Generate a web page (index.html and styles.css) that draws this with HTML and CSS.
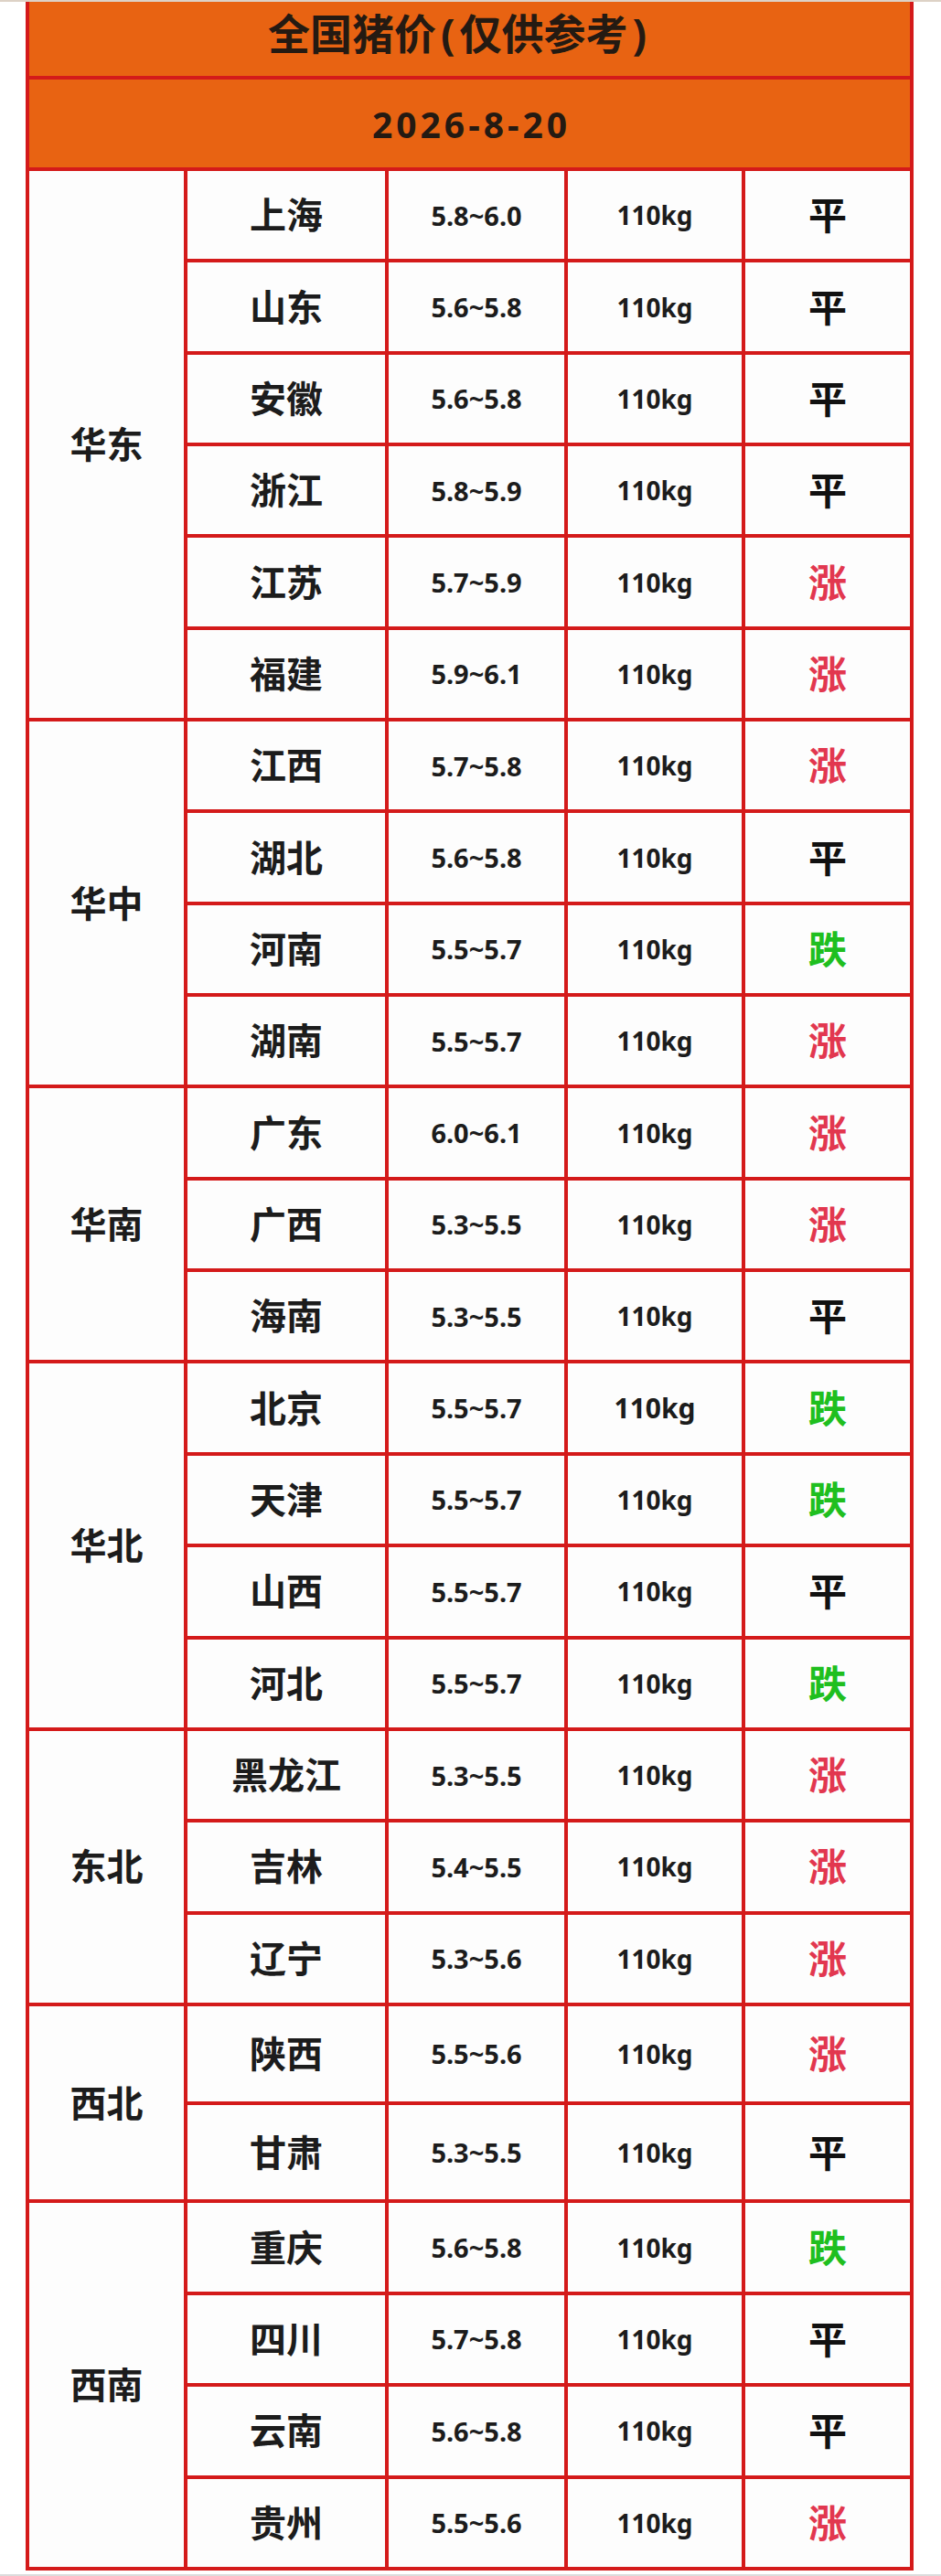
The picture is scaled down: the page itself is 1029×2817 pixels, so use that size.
FILE: index.html
```html
<!DOCTYPE html>
<html lang="zh-CN">
<head>
<meta charset="utf-8">
<title>全国猪价</title>
<link rel="stylesheet" href="styles.css">
</head>
<body>
<div class="page">
  <div class="sheet">
    <div class="head title">全国猪价<span class="paren">(</span>仅供参考<span class="paren">)</span></div>
    <div class="head date">2026-8-20</div>

    <div class="region span6">华东</div>
    <div class="prov">上海</div><div class="price">5.8~6.0</div><div class="wt">110kg</div><div class="st flat">平</div>
    <div class="prov">山东</div><div class="price">5.6~5.8</div><div class="wt">110kg</div><div class="st flat">平</div>
    <div class="prov">安徽</div><div class="price">5.6~5.8</div><div class="wt">110kg</div><div class="st flat">平</div>
    <div class="prov">浙江</div><div class="price">5.8~5.9</div><div class="wt">110kg</div><div class="st flat">平</div>
    <div class="prov">江苏</div><div class="price">5.7~5.9</div><div class="wt">110kg</div><div class="st up">涨</div>
    <div class="prov">福建</div><div class="price">5.9~6.1</div><div class="wt">110kg</div><div class="st up">涨</div>

    <div class="region span4">华中</div>
    <div class="prov">江西</div><div class="price">5.7~5.8</div><div class="wt">110kg</div><div class="st up">涨</div>
    <div class="prov">湖北</div><div class="price">5.6~5.8</div><div class="wt">110kg</div><div class="st flat">平</div>
    <div class="prov">河南</div><div class="price">5.5~5.7</div><div class="wt">110kg</div><div class="st down">跌</div>
    <div class="prov">湖南</div><div class="price">5.5~5.7</div><div class="wt">110kg</div><div class="st up">涨</div>

    <div class="region span3">华南</div>
    <div class="prov">广东</div><div class="price">6.0~6.1</div><div class="wt">110kg</div><div class="st up">涨</div>
    <div class="prov">广西</div><div class="price">5.3~5.5</div><div class="wt">110kg</div><div class="st up">涨</div>
    <div class="prov">海南</div><div class="price">5.3~5.5</div><div class="wt">110kg</div><div class="st flat">平</div>

    <div class="region span4">华北</div>
    <div class="prov">北京</div><div class="price">5.5~5.7</div><div class="wt big">110kg</div><div class="st down">跌</div>
    <div class="prov">天津</div><div class="price">5.5~5.7</div><div class="wt">110kg</div><div class="st down">跌</div>
    <div class="prov">山西</div><div class="price">5.5~5.7</div><div class="wt">110kg</div><div class="st flat">平</div>
    <div class="prov">河北</div><div class="price">5.5~5.7</div><div class="wt">110kg</div><div class="st down">跌</div>

    <div class="region span3">东北</div>
    <div class="prov">黑龙江</div><div class="price">5.3~5.5</div><div class="wt">110kg</div><div class="st up">涨</div>
    <div class="prov">吉林</div><div class="price">5.4~5.5</div><div class="wt">110kg</div><div class="st up">涨</div>
    <div class="prov">辽宁</div><div class="price">5.3~5.6</div><div class="wt">110kg</div><div class="st up">涨</div>

    <div class="region span2">西北</div>
    <div class="prov">陕西</div><div class="price">5.5~5.6</div><div class="wt">110kg</div><div class="st up">涨</div>
    <div class="prov">甘肃</div><div class="price">5.3~5.5</div><div class="wt">110kg</div><div class="st flat">平</div>

    <div class="region span4">西南</div>
    <div class="prov">重庆</div><div class="price">5.6~5.8</div><div class="wt">110kg</div><div class="st down">跌</div>
    <div class="prov">四川</div><div class="price">5.7~5.8</div><div class="wt">110kg</div><div class="st flat">平</div>
    <div class="prov">云南</div><div class="price">5.6~5.8</div><div class="wt">110kg</div><div class="st flat">平</div>
    <div class="prov">贵州</div><div class="price">5.5~5.6</div><div class="wt">110kg</div><div class="st up">涨</div>
  </div>
  <div class="foot"></div>
</div>
</body>
</html>
```

FILE: styles.css
```css
html, body {
  margin: 0;
  padding: 0;
  background: #ffffff;
}

body {
  font-family: "Noto Sans", "Noto Sans CJK SC", sans-serif;
  font-weight: 700;
  color: #1c1c1c;
}

.page {
  border-top: 2px solid #ddd2c6;
}

.sheet {
  margin-left: 28px;
  width: 971px;
  box-sizing: border-box;
  display: grid;
  grid-template-columns: 169px 216px 192px 190px 180px;
  grid-template-rows: 81px 96px repeat(20, 96.35px) repeat(2, 103.8px) repeat(4, 96.35px);
  gap: 4px;
  padding: 0 4px 4px 4px;
  background: #d41a1a;
}

.sheet > div {
  display: flex;
  align-items: center;
  justify-content: center;
  background: #fdfdfd;
  line-height: 1;
}

.sheet > .head {
  grid-column: 1 / -1;
  background: #e86312;
  color: #241a12;
}

.title {
  font-size: 46px;
  padding-right: 22px;
  padding-bottom: 14px;
}

.paren {
  margin: 0 5px;
}

.date {
  font-size: 39px;
  letter-spacing: 4px;
  padding-left: 4px;
}

.region {
  font-size: 40px;
}

.span6 { grid-row: span 6; }
.span4 { grid-row: span 4; }
.span3 { grid-row: span 3; }
.span2 { grid-row: span 2; }

.prov {
  font-size: 40px;
}

.price {
  font-size: 29px;
}

.wt {
  font-size: 28px;
}

.wt.big {
  font-size: 30px;
}

.st {
  font-size: 42px;
}

.flat { color: #111111; }
.up { color: #e2374f; }
.down { color: #1fbf1f; }

.foot {
  margin-top: 4px;
  height: 2px;
  background: #dcdcdc;
}
```
